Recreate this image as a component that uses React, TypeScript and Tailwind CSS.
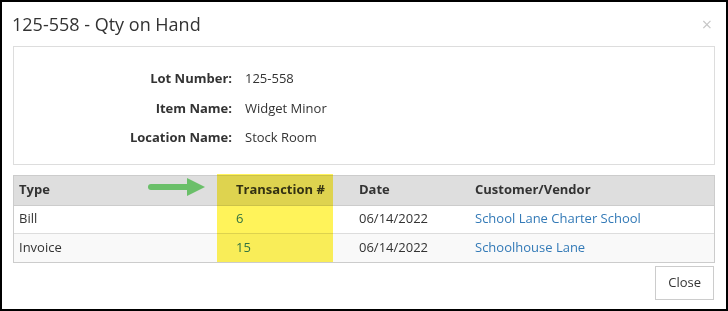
import React from "react";

const rows = [
  { type: "Bill", txn: "6", date: "06/14/2022", party: "School Lane Charter School" },
  { type: "Invoice", txn: "15", date: "06/14/2022", party: "Schoolhouse Lane" },
];

const details = [
  ["Lot Number:", "125-558"],
  ["Item Name:", "Widget Minor"],
  ["Location Name:", "Stock Room"],
];

export default function App() {
  return (
    <div
      className="w-[728px] h-[311px] border-2 border-black bg-white text-[#333] overflow-hidden"
      style={{ fontFamily: '"Segoe UI", "Open Sans", sans-serif' }}
    >
      <div className="flex items-center justify-between h-[44px] pl-[10px] pr-[14px]">
        <h4 className="text-[18px] leading-none">125-558 - Qty on Hand</h4>
        <span className="text-[#c8c8c8] text-[18px] leading-none">×</span>
      </div>

      <div className="mx-[11px] border border-[#ddd] pt-[17px] pb-[11px]">
        {details.map(([label, value]) => (
          <div key={label} className="flex h-[29.5px] items-center text-[13px]">
            <div className="w-[218px] text-right font-bold">{label}</div>
            <div className="pl-[13px]">{value}</div>
          </div>
        ))}
      </div>

      <div className="relative mx-[11px] mt-[10px] border border-[#ccc] text-[13px]">
        <div className="grid grid-cols-[222px_123px_116px_1fr] h-[30px] items-center bg-[#dedede] font-bold border-b border-[#ccc]">
          <div className="pl-[5px]">Type</div>
          <div>Transaction #</div>
          <div>Date</div>
          <div>Customer/Vendor</div>
        </div>
        {rows.map((r, i) => (
          <div
            key={r.txn}
            className={
              "grid grid-cols-[222px_123px_116px_1fr] h-[28px] items-center " +
              (i === 1 ? "bg-[#f9f9f9]" : "bg-white border-b border-[#ddd]")
            }
          >
            <div className="pl-[5px]">{r.type}</div>
            <div className="text-[#337ab7]">{r.txn}</div>
            <div>{r.date}</div>
            <div className="text-[#337ab7]">{r.party}</div>
          </div>
        ))}

        <div className="absolute left-[203px] top-[-2px] w-[116px] h-[88px] bg-[#fff35a] mix-blend-multiply pointer-events-none" />
        <svg className="absolute left-[133px] top-[0px]" width="60" height="22" viewBox="0 0 60 22">
          <line x1="4" y1="11" x2="42" y2="11" stroke="#6abf69" strokeWidth="6" strokeLinecap="round" />
          <polygon points="40,2 58,11 40,20" fill="#6abf69" />
        </svg>
      </div>

      <div className="flex justify-end pr-[12px] pt-[3px]">
        <button className="h-[34px] px-[12px] border border-[#ccc] bg-white text-[13px]">Close</button>
      </div>
    </div>
  );
}
